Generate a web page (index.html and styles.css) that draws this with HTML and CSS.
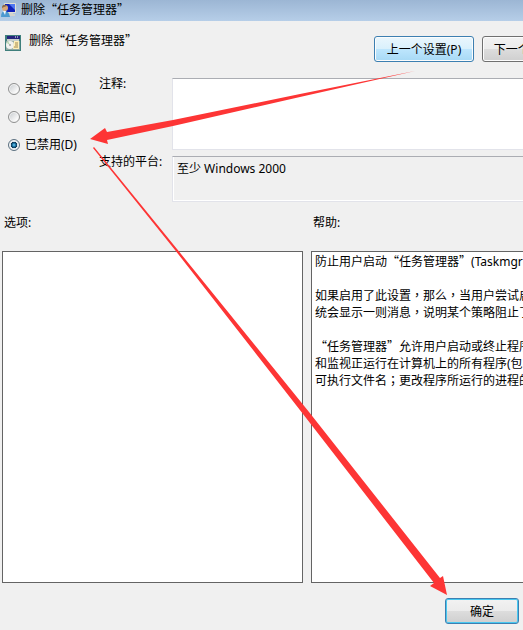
FILE: index.html
```html
<!DOCTYPE html>
<html lang="zh-CN">
<head>
<meta charset="utf-8">
<title>删除“任务管理器”</title>
<link rel="stylesheet" href="styles.css">
</head>
<body>
<header class="titlebar">
  <svg class="app-icon" viewBox="0 0 17 17" aria-hidden="true">
    <rect x="4" y="2" width="12" height="10" rx="1" fill="#e2e0d4"/>
    <rect x="5" y="3" width="10" height="8" fill="#1020b8"/>
    <path d="M9 3h6v6z" fill="#5078f0"/>
    <path d="M9 12h4v1h2v2H9z" fill="#d4d4cc"/>
    <circle cx="5" cy="7" r="3" fill="#dba878"/>
    <path d="M2 7q0-4 4-3l1 1-3 1z" fill="#8a6a48"/>
    <path d="M1 16q0-6 4-6t5 6z" fill="#4d9ad0"/>
    <path d="M3 10h3l-1 4z" fill="#f4f8fc"/>
  </svg>
  <h1><span class="cjk">删除“任务管理器”</span></h1>
</header>
<main>
  <div class="heading">
    <svg class="policy-icon" viewBox="0 0 16 16" aria-hidden="true">
      <rect width="16" height="16" fill="#3f7f7c"/>
      <rect x="2" y="1" width="13" height="3" fill="#25257c"/>
      <path d="M10 2h1m1 0h1" stroke="#fff"/>
      <rect x="2" y="4" width="12" height="2" fill="#c8d0cc"/>
      <rect x="1" y="6" width="14" height="9" fill="#8fa8a2"/>
      <circle cx="5" cy="10" r="4" fill="#f1f1ef"/>
      <path d="M5 10L2 8l1-2z" fill="#b4d6a9"/>
      <circle cx="5" cy="10" r="1" fill="#9aa4a4"/>
      <path d="M9 6h5v8H8z" fill="#fff0b8"/>
      <path d="M10 8h3M10 10h3M9 12h4" stroke="#a08850"/>
    </svg>
    <h2><span class="cjk">删除“任务管理器”</span></h2>
    <div class="nav">
      <button type="button" class="btn hot">上一个设置(P)</button>
      <button type="button" class="btn">下一个设置(N)</button>
    </div>
  </div>
  <div class="settings">
    <div class="states" role="radiogroup" aria-label="状态">
      <label><input type="radio" name="state">未配置(C)</label>
      <label><input type="radio" name="state">已启用(E)</label>
      <label><input type="radio" name="state" checked>已禁用(D)</label>
    </div>
    <div class="fields">
      <label for="comment">注释:</label>
      <textarea id="comment" class="comment"></textarea>
      <label for="platform">支持的平台:</label>
      <textarea id="platform" class="platform" readonly>至少 Windows 2000</textarea>
    </div>
  </div>
  <div class="panels">
    <section>
      <h3>选项:</h3>
      <div class="panel"></div>
    </section>
    <section>
      <h3>帮助:</h3>
      <div class="panel help">
        <p>防止用户启动<span class="cjk">“任务管理器”</span>(Taskmgr</p>
        <p>如果启用了此设置<span class="mid" lang="zh-TW">，</span>那么<span class="mid" lang="zh-TW">，</span>当用户尝试启<br>统会显示一则消息<span class="mid" lang="zh-TW">，</span>说明某个策略阻止了</p>
        <p><span class="cjk">“任务管理器”</span>允许用户启动或终止程序<br>和监视正运行在计算机上的所有程序(包<br>可执行文件名<span class="mid" lang="zh-TW">；</span>更改程序所运行的进程的</p>
      </div>
    </section>
  </div>
  <footer><button type="button" class="btn default">确定</button></footer>
</main>
<svg class="arrows" width="523" height="630" viewBox="0 0 523 630" aria-hidden="true">
  <path d="M90 139L105 128L107 132L173 120L300 94L415 71L300 97L173 126L107 140L108 144Z"/>
  <path d="M94 147L177 249L309 412L440 578L443 576L447 595L430 586L434 583L303 414L175 250L93 148Z"/>
</svg>
</body>
</html>
```
FILE: styles.css
```css
* {
  box-sizing: border-box;
}

body {
  margin: 0;
  position: relative;
  overflow: hidden;
  background: #f0f0f0;
  color: #000;
  font: 12px/17px "Noto Sans", "Noto Sans CJK SC", sans-serif;
}

h1, h2, h3, p {
  margin: 0;
  font-size: 12px;
  font-weight: 400;
}

button, textarea, input {
  font: inherit;
  color: inherit;
}

.cjk {
  font-family: "Noto Sans CJK SC", sans-serif;
  line-height: 12px;
}

.mid {
  font-family: "Noto Sans CJK TC", sans-serif;
  line-height: 12px;
}

.titlebar {
  display: flex;
  align-items: center;
  gap: 4px;
  height: 21px;
  padding-bottom: 2px;
  background: linear-gradient(#9cb6d4, #b6cee8);
}

.app-icon {
  width: 17px;
  height: 17px;
}

.heading {
  display: flex;
  align-items: flex-start;
  gap: 8px;
  padding: 11px 0 0 5px;
}

.policy-icon {
  width: 16px;
  height: 16px;
  margin-top: 3px;
}

.heading h2 {
  flex: 1;
}

.nav {
  display: flex;
  flex: 0 0 149px;
  min-width: 0;
  gap: 8px;
  margin-top: 4px;
  overflow: hidden;
}

.btn {
  flex: none;
  width: 100px;
  height: 26px;
  padding: 0;
  border: 1px solid #707070;
  border-radius: 3px;
  box-shadow: inset 0 0 0 1px #fcfcfc;
  background: linear-gradient(#f2f2f2, #ebebeb 50%, #dddddd 50%, #cfcfcf);
}

.hot {
  border-color: #3c7fb1;
  background: linear-gradient(#eaf6fd, #d9f0fc 50%, #bee6fd 50%, #a7d9f5);
}

.default {
  width: 74px;
  border-color: #3c7fb1;
  box-shadow: inset 0 0 0 1px #48c8f0;
}

.settings {
  display: grid;
  grid-template-columns: 91px 1fr;
  padding: 16px 0 0 8px;
}

.states {
  display: flex;
  flex-direction: column;
  gap: 11px;
  padding-top: 2px;
}

.states label {
  display: flex;
  align-items: center;
  gap: 5px;
}

.states input {
  appearance: none;
  width: 12px;
  height: 12px;
  margin: 0;
  border: 1px solid #8e8f8f;
  border-radius: 50%;
  background: linear-gradient(135deg, #c4c8cc, #fafafa 75%);
  box-shadow: inset 0 0 0 1px #f4f4f4;
}

.states input:checked {
  border-color: #5c7080;
  background: radial-gradient(circle at 50% 50%, #7fd4f4 0, #2181b4 20%, #0b3350 42%, #dbe5ec 50%);
}

.fields {
  display: grid;
  grid-template-columns: 73px 1fr;
  row-gap: 6px;
}

.fields label {
  margin-top: -3px;
}

.fields textarea {
  display: block;
  width: 100%;
  padding: 3px 4px;
  border: 1px solid #e2e3ea;
  border-top-color: #abadb3;
  border-right: 0;
  resize: none;
  outline: 0;
  overflow: hidden;
}

.comment {
  height: 72px;
  background: #fff;
}

.fields .platform {
  height: 46px;
  background: #f0f0f0;
  box-shadow: inset 1px -1px #fff;
}

.panels {
  display: grid;
  grid-template-columns: 301px minmax(0, 1fr);
  gap: 8px;
  padding: 12px 0 0 2px;
}

.panels h3 {
  padding: 0 2px 20px;
}

.panel {
  height: 332px;
  border: 1px solid #646464;
  background: #fff;
}

.help {
  display: flex;
  flex-direction: column;
  gap: 17px;
  padding: 1px 3px;
  border-right: 0;
  overflow: hidden;
  white-space: nowrap;
}

footer {
  display: flex;
  justify-content: flex-end;
  padding: 15px 4px 6px;
}

.arrows {
  position: absolute;
  top: 0;
  left: 0;
  fill: #fd3535;
  pointer-events: none;
}
```
